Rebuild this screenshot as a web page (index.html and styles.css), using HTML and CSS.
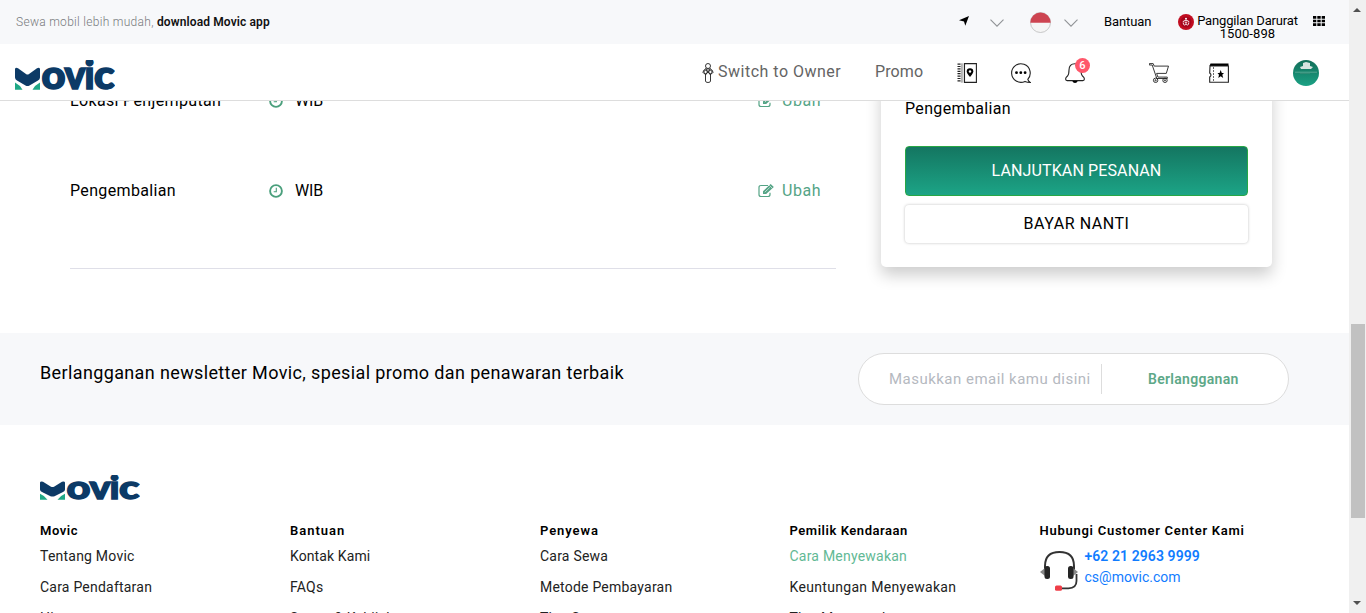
FILE: index.html
```html
<!DOCTYPE html>
<html lang="id">
<head>
<meta charset="utf-8">
<title>Movic</title>
<link rel="stylesheet" href="styles.css">
</head>
<body>
<svg class="defs" width="0" height="0">
  <symbol id="logo" viewBox="0 0 100 30" preserveAspectRatio="none">
    <path fill="#0c3a66" d="M0 9q.5-2 3-.8L11 14q1.500 1 3 0l8-5.800Q24.500 7 25 9v8.500q0 2-2 3l-8.500 4.900q-2 1-4 0L2 20.500Q0 19.500 0 17.500z"/>
    <path fill="#1fa886" d="M0 22.500q5 2.500 7.500 7.300H0zM25 22.500q-5 2.500-7.500 7.300H25z"/>
    <g class="logo-text"><text x="26.500" y="28.800" textLength="24" lengthAdjust="spacingAndGlyphs">o</text><text x="49.500" y="28.800" textLength="21" lengthAdjust="spacingAndGlyphs">v</text><text x="69.500" y="28.800" textLength="10" lengthAdjust="spacingAndGlyphs">i</text><text x="79" y="28.800" textLength="20.500" lengthAdjust="spacingAndGlyphs">c</text></g>
  </symbol>
  <symbol id="clock" viewBox="0 0 14 14"><circle cx="7" cy="7" r="5.900" fill="none" stroke="#4a9f7c" stroke-width="1.900"/><path d="M7.300 3.700v4H4.700" fill="none" stroke="#4a9f7c" stroke-width="1.100"/></symbol>
  <symbol id="edit" viewBox="0 0 16 14"><path d="M10 1.500H3Q1 1.500 1 3.500v7q0 2 2 2h7q2 0 2-2V8.700" fill="none" stroke="#55a486" stroke-width="1.200"/><path d="M5 10V7.200L12.600 0l3.200 3L8.200 10z" fill="#55a486"/><path d="M6.800 8.200l5-4.800M11.300 1.300l2.800 2.800" stroke="#fff" stroke-width=".6"/></symbol>
  <symbol id="chev" viewBox="0 0 14 8"><path d="M.5.7L7 7.200 13.500.7" fill="none" stroke="#909396" stroke-width="1.100"/></symbol>
</svg>
<div class="page">
  <header>
    <div class="topbar">
      <p class="promo-text">Sewa mobil lebih mudah, <b>download Movic app</b></p>
      <svg class="arrow" viewBox="0 0 10 10"><path d="M10 0L6.300 9.800 5 5.400 0 4.300z"/></svg>
      <svg class="chev first"><use href="#chev"/></svg>
      <svg class="flag" viewBox="0 0 21 21"><circle cx="10.500" cy="10.500" r="10" fill="#f5f5f5" stroke="#bbb" stroke-width=".8"/><path d="M.3 10.700a10.200 10.200 0 0 1 20.400 0z" fill="#cd4451"/></svg>
      <svg class="chev second"><use href="#chev"/></svg>
      <span class="help">Bantuan</span>
      <svg class="sos" viewBox="0 0 16 16"><circle cx="8" cy="8" r="8" fill="#c10d20"/><circle cx="8" cy="8" r="5.500" fill="#a7041b"/><circle cx="8" cy="4.800" r="1" fill="#fff"/><path d="M5 8q0-1.500 3-1.500T11 8M5.200 8.500q0 2.500 1.300 2.500T8 9.500Q8.200 11 9.500 11t1.300-2.500M6.800 8.300h2.400" fill="none" stroke="#fff" stroke-width=".9"/></svg>
      <span class="emergency"><span>Panggilan Darurat</span><span class="number">1500-898</span></span>
      <svg class="apps" viewBox="0 0 12 10"><path d="M0 0h3.300v2.700H0zM4.300 0h3.400v2.700H4.300zM8.700 0H12v2.700H8.700zM0 3.700h3.300v2.600H0zM4.300 3.700h3.400v2.600H4.300zM8.700 3.700H12v2.600H8.700zM0 7.300h3.300V10H0zM4.300 7.300h3.400V10H4.300zM8.700 7.300H12V10H8.700z"/></svg>
    </div>
    <nav class="nav">
      <svg class="logo"><use href="#logo"/></svg>
      <svg class="owner" viewBox="0 0 12 20"><g fill="none" stroke="#222" stroke-width=".9"><circle cx="6" cy="3" r="2.500"/><path d="M3.500 6Q1 7 1 9.500q1 1.500 2.500 1.500V18q0 1.500 2.500 1.500T8.500 18v-7Q10 11 11 9.500 11 7 8.500 6z"/><circle cx="3.600" cy="9" r="1.700"/><circle cx="8.400" cy="9" r="1.700"/><path d="M3.500 5.500L8.500 12M8.500 5.500L3.500 12"/></g></svg>
      <span class="switch">Switch to Owner</span>
      <span class="promo">Promo</span>
      <svg class="icon book" viewBox="0 0 20 20"><path d="M7.500.6h11.900v18.800H7.500z" fill="none" stroke="#222" stroke-width="1.100"/><path d="M4.300.3v19.400M5.800.3v19.400" stroke="#888" stroke-width=".8"/><path d="M2 .5v19" stroke="#222" stroke-width="3" stroke-dasharray="1.200 1.200"/><path d="M13 14q-3.300-4-3.300-5.500a3.300 3.300 0 0 1 6.600 0Q16.300 10 13 14z"/><circle cx="13" cy="8.500" r="1.200" fill="#fff"/></svg>
      <svg class="icon chat" viewBox="0 0 20 20"><path d="M16.800 16.300A9.300 9.300 0 1 0 14 18.400q2 1 5.300 1-1.900-1.100-2.500-3.100z" fill="none" stroke="#222" stroke-width="1.100"/><circle cx="5.500" cy="9.700" r="1.400"/><circle cx="9.800" cy="9.700" r="1.400"/><circle cx="14.100" cy="9.700" r="1.400"/></svg>
      <span class="bell"><svg viewBox="0 0 20 20"><path d="M10 .8Q4 .8 4 7q0 4.500-1.500 6Q.6 14.500.6 16t1.600 1.600h15.600q1.600-.1 1.600-1.600t-1.900-3Q16 11.500 16 7q0-6.200-6-6.200z" fill="none" stroke="#222" stroke-width="1.100"/><path d="M7.300 18h5.400Q12 20 10 20t-2.700-2z"/></svg><i class="badge">6</i></span>
      <svg class="icon cart" viewBox="0 0 20 20"><g fill="none" stroke="#222" stroke-width=".9"><path d="M.3.6h3.900l1 2.500h14.300l-2.200 7.300H7.600l1.300 3.700h9.400v1.400H7.800L3.200 2H.3z"/><circle cx="6.600" cy="17.300" r="2.200"/><circle cx="16" cy="17.300" r="2.200"/><circle cx="6.600" cy="17.300" r=".6"/><circle cx="16" cy="17.300" r=".6"/></g></svg>
      <svg class="icon ticket" viewBox="0 0 20 20"><path d="M1.500.5h18v2.500H.5z"/><path d="M1 3h18.400v16.300H.7V14q1.300-.8 1.300-1.900T.7 10z" fill="none" stroke="#222" stroke-width="1.100"/><path d="M4.500 4v15" stroke="#444" stroke-width=".8" stroke-dasharray="2 1"/><path d="M11.700 7l1.100 2.900 2.200.1-1.700 1.800.9 3.200-2.500-1.700L9.300 15l.7-3.200L8.500 10l2.100-.1z"/></svg>
      <svg class="avatar" viewBox="0 0 26 26"><defs><linearGradient id="av" x2="0" y2="1"><stop stop-color="#126e59"/><stop offset="1" stop-color="#1ba184"/></linearGradient></defs><circle cx="13" cy="13" r="13" fill="url(#av)"/><path d="M7 7l3-1V3l3-1 4 1v3l3 1-2 2H8z" fill="#d5e4e0"/><path d="M2 12.200h22" stroke="#67ad9b" stroke-width=".8"/><path d="M7 13.500h10" stroke="#3f8d79" stroke-width=".6"/></svg>
    </nav>
  </header>
  <main>
    <section class="details">
      <div class="row"><span class="label">Lokasi Penjemputan</span><svg class="clock"><use href="#clock"/></svg><span class="zone">WIB</span><svg class="edit"><use href="#edit"/></svg><a class="change">Ubah</a></div>
      <div class="row"><span class="label">Pengembalian</span><svg class="clock"><use href="#clock"/></svg><span class="zone">WIB</span><svg class="edit"><use href="#edit"/></svg><a class="change">Ubah</a></div>
    </section>
    <aside class="card">
      <span class="label">Pengembalian</span>
      <button class="primary">LANJUTKAN PESANAN</button>
      <button class="later">BAYAR NANTI</button>
    </aside>
  </main>
  <section class="newsletter">
    <p>Berlangganan newsletter Movic, spesial promo dan penawaran terbaik</p>
    <form class="subscribe"><span class="email">Masukkan email kamu disini</span><span class="submit">Berlangganan</span></form>
  </section>
  <footer>
    <svg class="logo"><use href="#logo"/></svg>
    <div class="columns">
      <div><h4>Movic</h4><a>Tentang Movic</a><a>Cara Pendaftaran</a><a>Hiasan</a></div>
      <div><h4 class="help-title">Bantuan</h4><a class="contact-link">Kontak Kami</a><a>FAQs</a><a>Syarat &amp; Kebijakan</a></div>
      <div><h4 class="renter-title">Penyewa</h4><a>Cara Sewa</a><a>Metode Pembayaran</a><a>Tips Sewa</a></div>
      <div><h4>Pemilik Kendaraan</h4><a class="active">Cara Menyewakan</a><a class="wide">Keuntungan Menyewakan</a><a>Tips Menyewakan</a></div>
      <div><h4 class="center">Hubungi Customer Center Kami</h4>
        <div class="contact">
          <svg viewBox="0 0 38 42"><path d="M5 20V16Q5 2 19.500 2T34 16v5" fill="none" stroke="#333" stroke-width="2"/><path d="M0 22l5-4v8zM38 22l-5-4v8z" fill="#888"/><rect x="4.500" y="16" width="5.500" height="13" rx="2.500" fill="#252525"/><rect x="28" y="16" width="5.500" height="13" rx="2.500" fill="#252525"/><path d="M36.500 24v7q0 7-8 7.300H20" fill="none" stroke="#333" stroke-width="1.800"/><rect x="15" y="35.500" width="7" height="5.200" rx="1.500" fill="#ef3e48"/></svg>
          <p><b>+62 21 2963 9999</b><span>cs@movic.com</span></p>
        </div>
      </div>
    </div>
  </footer>
</div>
<div class="scrollbar">
  <svg class="up" viewBox="0 0 8 4"><path d="M0 4l4-4 4 4z"/></svg>
  <div class="thumb"></div>
  <svg class="down" viewBox="0 0 8 4"><path d="M0 0l4 4 4-4z"/></svg>
</div>
</body>
</html>
```
FILE: styles.css
```css
* { box-sizing: border-box; }
body { margin: 0; display: flex; height: 613px; overflow: hidden; background: #fff; color: #000; font: 16px/20px Roboto, sans-serif; }
.defs { position: absolute; }
svg { display: block; flex: none; }
p, h4 { margin: 0; }
span, a, b, button { white-space: nowrap; }
.page { width: 1349px; height: 613px; overflow: hidden; display: flex; flex-direction: column; }
.page > * { flex: none; }
header { height: 101px; border-bottom: 1px solid #ddd; }
.topbar { height: 44px; background: #f7f8fa; display: flex; align-items: center; font-size: 13px; }
.promo-text { width: 943px; padding-left: 16px; font-size: 12px; color: #777a7d; font-weight: 300; letter-spacing: .29px; }
.promo-text b { color: #111; font-weight: 600; letter-spacing: .12px; }
.arrow { width: 10px; height: 10px; margin: 0 0 2px 16px; }
.chev { width: 14px; height: 8px; margin-top: 2px; }
.first { margin-left: 21px; }
.flag { width: 21px; height: 21px; margin-left: 26px; }
.second { margin-left: 13px; }
.help { width: 48px; margin-left: 26px; letter-spacing: -.1px; }
.sos { width: 16px; height: 16px; margin-left: 26px; }
.emergency { width: 101px; margin-left: 3px; padding-top: 10px; line-height: 13px; letter-spacing: -.16px; display: flex; flex-direction: column; align-items: center; }
.number { letter-spacing: .1px; }
.apps { width: 12px; height: 10px; margin: 0 0 2px 15px; }
.nav { height: 56px; display: flex; align-items: center; color: #646464; }
.logo { width: 100px; height: 30px; }
.logo-text { font: 900 39px Lato, sans-serif; fill: #0c3a66; stroke: #0c3a66; stroke-width: 1.6px; }
.nav .logo { margin: 6px 0 0 15px; }
.owner { width: 12px; height: 20px; margin: 2px 0 0 587px; }
.switch { width: 124px; margin-left: 4px; letter-spacing: .5px; }
.promo { width: 50px; margin-left: 33px; letter-spacing: .1px; }
.icon { width: 20px; height: 20px; margin-top: 2px; }
.book { margin-left: 32px; }
.chat { margin-left: 34px; }
.bell { position: relative; width: 20px; height: 20px; margin: 2px 0 0 34px; }
.badge { position: absolute; left: 10px; top: -5px; width: 15px; height: 15px; border-radius: 50%; background: #ff586b; color: #fff; font: 500 11px/15px Roboto, sans-serif; text-align: center; }
.cart { margin-left: 64px; }
.ticket { margin-left: 40px; }
.avatar { width: 26px; height: 26px; margin: 2px 0 0 64px; }
main { height: 232px; overflow: hidden; display: flex; align-items: flex-start; padding-left: 70px; }
.details { width: 766px; height: 214px; margin-top: -46px; padding-top: 1px; border-bottom: 1px solid #dfdfe8; }
.row { height: 90px; display: flex; align-items: center; }
.label { width: 199px; letter-spacing: .35px; }
.clock { width: 14px; height: 14px; margin-top: -1px; }
.zone { width: 463px; margin-left: 12px; letter-spacing: -.1px; }
.edit { width: 16px; height: 14px; margin-top: -1px; }
.change { margin-left: 8px; color: #55a486; letter-spacing: .55px; }
.card { width: 391px; height: 186px; margin: -20px 0 0 45px; padding: 18px 24px; display: flex; flex-direction: column; border-radius: 5px; box-shadow: 0 8px 16px rgba(0,0,0,.2); }
button { font: 16px/20px Roboto, sans-serif; padding: 0; border-radius: 4px; }
.primary { height: 50px; margin-top: 27px; flex: none; border: 1px solid #28a745; background: linear-gradient(#147661, #1ca486); color: #fff; letter-spacing: .12px; }
.later { height: 38px; margin: 9px 0 0; flex: none; border: 0; background: #fff; box-shadow: 0 0 3px rgba(0,0,0,.25); letter-spacing: .55px; }
.newsletter { height: 92px; background: #f7f8fa; padding: 20px 60px 0 40px; display: flex; justify-content: space-between; }
.newsletter p { font-size: 18px; line-height: 40px; letter-spacing: .37px; }
.subscribe { width: 431px; height: 52px; border: 1px solid #ddd; border-radius: 26px; background: #fff; display: flex; align-items: center; padding-left: 30px; }
.email { width: 213px; border-right: 1px solid #ddd; line-height: 30px; font-size: 15px; letter-spacing: .48px; color: #b5b9bf; }
.submit { margin-left: 46px; font-size: 14px; font-weight: 600; letter-spacing: .3px; color: #5da888; }
footer { height: 188px; padding: 50px 0 0 40px; overflow: hidden; }
footer .logo { height: 25px; }
.columns { display: grid; grid-template-columns: 250px 250px 249.5px 250px 280px; margin-top: 21px; font-size: 14px; letter-spacing: .22px; color: #222; }
h4 { font-size: 13px; line-height: 20px; font-weight: 600; letter-spacing: .55px; color: #000; }
.help-title { letter-spacing: 1px; }
.renter-title { letter-spacing: .9px; }
.center { letter-spacing: .74px; }
.columns a { display: block; height: 31px; line-height: 30px; }
.columns .wide { letter-spacing: .32px; }
.columns .contact-link { letter-spacing: .1px; }
.columns .active { color: #62b995; }
.contact { display: flex; color: #117cff; letter-spacing: 0; }
.contact svg { width: 38px; height: 42px; margin-top: 9px; }
.contact p { margin: 5px 0 0 7px; display: flex; flex-direction: column; line-height: 21px; }
.contact b { font-weight: 600; letter-spacing: .08px; }
.scrollbar { width: 17px; height: 613px; background: #f0f0f0; padding: 8px 2px 0; }
.scrollbar svg { width: 8px; height: 4px; margin-left: 2px; fill: #505050; }
.thumb { height: 194px; margin: 312px -1px 83px 0; background: #c1c1c1; }
```
